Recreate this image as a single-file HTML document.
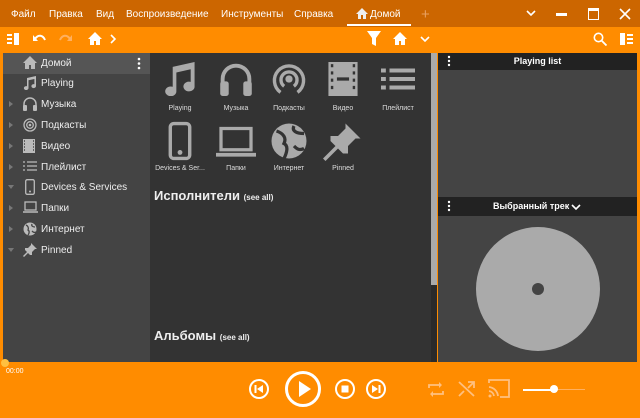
<!DOCTYPE html>
<html><head><meta charset="utf-8"><style>
*{margin:0;padding:0;box-sizing:border-box}
body{width:640px;height:418px;overflow:hidden;background:#ff8c00;font-family:"Liberation Sans",Arial,sans-serif;position:relative;color:#fff}
.a{position:absolute}
.menu span{position:absolute;top:9px;font-size:10px;color:#fff}
.side{left:3px;top:53px;width:147px;height:309px;background:#444}
.row{position:absolute;left:0;width:147px;height:21px;font-size:10px;color:#eee}
.row .t{position:absolute;left:38px;top:5px}
.row .ar{position:absolute;left:6px;top:7px;width:0;height:0;border-left:4px solid #777;border-top:3px solid transparent;border-bottom:3px solid transparent}
.row .dn{position:absolute;left:5px;top:8px;width:0;height:0;border-top:4px solid #777;border-left:3px solid transparent;border-right:3px solid transparent}
.row svg{position:absolute;left:20px;top:3px}
.tile{position:absolute;width:58px;text-align:center;font-size:7px;color:#ddd}
.tile svg{display:block;margin:0 auto}
</style></head><body>
<div class="a" style="left:0;top:0;width:640px;height:27px;background:#cc6600"></div>
<div class="menu">
<span style="left:11px">Файл</span><span style="left:49px">Правка</span><span style="left:96px">Вид</span><span style="left:126px">Воспроизведение</span><span style="left:221px">Инструменты</span><span style="left:294px">Справка</span>
<span style="left:370px">Домой</span>
</div>
<svg class="a" style="left:356px;top:8px" width="12" height="11" viewBox="0 0 12 11"><path d="M6 0L0 6h2v5h3V7h2v4h3V6h2z" fill="#eee"/></svg>
<div class="a" style="left:347px;top:24px;width:64px;height:2px;background:#fff"></div>
<div class="a" style="left:421px;top:6px;font-size:15px;color:#e8a060">+</div>
<svg class="a" style="left:526px;top:9px" width="10" height="8"><path d="M1 2l4 4 4-4" stroke="#fff" stroke-width="1.6" fill="none"/></svg>
<div class="a" style="left:556px;top:13px;width:11px;height:3px;background:#fff"></div>
<div class="a" style="left:588px;top:8px;width:11px;height:12px;border:1.5px solid #fff;border-top-width:3px"></div>
<svg class="a" style="left:619px;top:8px" width="12" height="12"><path d="M1 1l10 10M11 1L1 11" stroke="#fff" stroke-width="1.6"/></svg>
<!-- toolbar -->
<svg class="a" style="left:7px;top:33px" width="13" height="12"><path d="M0 1h5v2H0zM0 5h5v2H0zM0 9h5v2H0zM7 0h5v12H7z" fill="#fff"/></svg>
<svg class="a" style="left:33px;top:33px" width="14" height="10"><path d="M2 6C5 1 10 2 12 7" stroke="#fff" stroke-width="2" fill="none"/><path d="M0 2v6h5z" fill="#fff"/></svg>
<svg class="a" style="left:58px;top:33px" width="14" height="10"><path d="M12 6C9 1 4 2 2 7" stroke="#ffb060" stroke-width="2" fill="none"/><path d="M14 2v6H9z" fill="#ffb060"/></svg>
<svg class="a" style="left:88px;top:32px" width="14" height="13"><path d="M7 0L0 7h2v6h4V9h2v4h4V7h2z" fill="#fff"/></svg>
<svg class="a" style="left:110px;top:34px" width="7" height="10"><path d="M1 1l4 4-4 4" stroke="#fff" stroke-width="1.6" fill="none"/></svg>
<svg class="a" style="left:367px;top:31px" width="14" height="15"><path d="M0 0h14L9 7v8L5 13V7z" fill="#fff"/></svg>
<svg class="a" style="left:393px;top:32px" width="14" height="13"><path d="M7 0L0 7h2v6h4V9h2v4h4V7h2z" fill="#fff"/></svg>
<svg class="a" style="left:420px;top:35px" width="10" height="8"><path d="M1 2l4 4 4-4" stroke="#fff" stroke-width="1.6" fill="none"/></svg>
<svg class="a" style="left:593px;top:32px" width="14" height="14"><circle cx="5.5" cy="5.5" r="4.2" stroke="#fff" stroke-width="1.6" fill="none"/><path d="M8.5 8.5l5 5" stroke="#fff" stroke-width="1.8"/></svg>
<svg class="a" style="left:620px;top:33px" width="13" height="12"><path d="M0 0h5v12H0zM7 1h6v2H7zM7 5h6v2H7zM7 9h6v2H7z" fill="#fff"/></svg>
<!-- sidebar -->
<div class="a side">
<div class="row" style="top:0;background:#555"><svg width="14" height="13" viewBox="0 0 14 13"><path d="M7 0L0 7h2v6h4V9h2v4h4V7h2z" fill="#bbb"/></svg><span class="t">Домой</span>
<svg style="left:134px;top:4px" width="4" height="13"><circle cx="2" cy="2" r="1.3" fill="#fff"/><circle cx="2" cy="6.5" r="1.3" fill="#fff"/><circle cx="2" cy="11" r="1.3" fill="#fff"/></svg></div>
<div class="row" style="top:20px"><svg width="14" height="14"><path d="M4 2l9-2v10a2.3 2 0 1 1-1.6-1.8V3L5.5 4.3v7.7a2.3 2 0 1 1-1.5-1.8z" fill="#bbb"/></svg><span class="t">Playing</span></div>
<div class="row" style="top:41px"><i class="ar"></i><svg width="14" height="14"><path d="M1 12V7a6 6 0 0 1 12 0v5" stroke="#bbb" stroke-width="1.5" fill="none"/><rect x="0" y="8" width="4" height="6" rx="1" fill="#bbb"/><rect x="10" y="8" width="4" height="6" rx="1" fill="#bbb"/></svg><span class="t">Музыка</span></div>
<div class="row" style="top:62px"><i class="ar"></i><svg width="14" height="14"><circle cx="7" cy="7" r="6" stroke="#bbb" stroke-width="1.3" fill="none"/><circle cx="7" cy="7" r="3.3" stroke="#bbb" stroke-width="1.3" fill="none"/><circle cx="7" cy="7" r="1.3" fill="#bbb"/></svg><span class="t">Подкасты</span></div>
<div class="row" style="top:83px"><i class="ar"></i><svg width="12" height="14"><rect x="0" y="0" width="12" height="14" fill="#bbb"/><path d="M1 2h1M1 5h1M1 8h1M1 11h1M10 2h1M10 5h1M10 8h1M10 11h1" stroke="#444" stroke-width="1.5"/></svg><span class="t">Видео</span></div>
<div class="row" style="top:104px"><i class="ar"></i><svg width="14" height="12"><path d="M0 2h2M0 6h2M0 10h2M4 2h10M4 6h10M4 10h10" stroke="#bbb" stroke-width="1.3"/></svg><span class="t">Плейлист</span></div>
<div class="row" style="top:124px"><i class="dn"></i><svg width="10" height="16" style="left:22px;top:2px"><rect x="0.7" y="0.7" width="8.6" height="14.6" rx="1.5" stroke="#bbb" stroke-width="1.3" fill="none"/><circle cx="5" cy="12.5" r="1" fill="#bbb"/></svg><span class="t">Devices &amp; Services</span></div>
<div class="row" style="top:145px"><i class="ar"></i><svg width="15" height="12"><rect x="2" y="1" width="11" height="8" stroke="#bbb" stroke-width="1.3" fill="none"/><path d="M0 11h15" stroke="#bbb" stroke-width="1.5"/></svg><span class="t">Папки</span></div>
<div class="row" style="top:166px"><i class="ar"></i><svg width="14" height="14"><circle cx="7" cy="7" r="6.5" fill="#bbb"/><path d="M3 3c2 1 3 3 2 5 2 1 1 4 0 5M9 2c-1 2 1 3 3 3M9 9c1 1 2 2 4 1" stroke="#444" stroke-width="1.3" fill="none"/></svg><span class="t">Интернет</span></div>
<div class="row" style="top:187px"><i class="dn"></i><svg width="14" height="14"><path d="M8 0l6 6-2 0-3 3 0 3-2 0-2-2-4 4-1-1 4-4-2-2 0-2 3 0 3-3z" fill="#bbb"/></svg><span class="t">Pinned</span></div>
</div>
<!-- content -->
<div class="a" style="left:150px;top:53px;width:281px;height:309px;background:#333"></div>
<div class="a" style="left:431px;top:53px;width:6px;height:232px;background:#aaa"></div>
<div class="a" style="left:431px;top:285px;width:6px;height:77px;background:#2a2a2a"></div>
<div class="tile" style="left:151px;top:62px"><svg width="34" height="34" viewBox="0 0 14 14"><path d="M4 2l9-2v10a2.3 2 0 1 1-1.6-1.8V3L5.5 4.3v7.7a2.3 2 0 1 1-1.5-1.8z" fill="#aaa"/></svg><div style="margin-top:9px">Playing</div></div>
<div class="tile" style="left:207px;top:62px"><svg width="34" height="34" viewBox="0 0 14 14"><path d="M1.5 12V7a5.5 5.5 0 0 1 11 0v5" stroke="#aaa" stroke-width="1.6" fill="none"/><rect x="0.5" y="8" width="3.5" height="6" rx="1" fill="#aaa"/><rect x="10" y="8" width="3.5" height="6" rx="1" fill="#aaa"/></svg><div style="margin-top:9px">Музыка</div></div>
<div class="tile" style="left:260px;top:62px"><svg width="34" height="34" viewBox="0 0 14 14"><path d="M3.5 12.5A6 6 0 1 1 10.5 12.5" stroke="#aaa" stroke-width="1.4" fill="none"/><path d="M5 10A3.3 3.3 0 1 1 9 10" stroke="#aaa" stroke-width="1.4" fill="none"/><circle cx="7" cy="7" r="1.5" fill="#aaa"/></svg><div style="margin-top:9px">Подкасты</div></div>
<div class="tile" style="left:314px;top:62px"><svg width="34" height="34" viewBox="0 0 14 14"><rect x="1" y="0" width="12" height="14" fill="#aaa"/><path d="M2 1.5h1M2 4.5h1M2 7.5h1M2 10.5h1M11 1.5h1M11 4.5h1M11 7.5h1M11 10.5h1M4.5 7h5" stroke="#333" stroke-width="1.3"/></svg><div style="margin-top:9px">Видео</div></div>
<div class="tile" style="left:369px;top:62px"><svg width="34" height="34" viewBox="0 0 14 14"><path d="M0 3.5h2M0 7h2M0 10.5h2M3.5 3.5H14M3.5 7H14M3.5 10.5H14" stroke="#aaa" stroke-width="1.6"/></svg><div style="margin-top:9px">Плейлист</div></div>
<div class="tile" style="left:151px;top:121px"><svg width="34" height="40" viewBox="0 0 14 16"><rect x="3" y="0.8" width="8" height="14.4" rx="1.5" stroke="#aaa" stroke-width="1.4" fill="none"/><circle cx="7" cy="12.7" r="1" fill="#aaa"/></svg><div style="margin-top:4px">Devices &amp; Ser...</div></div>
<div class="tile" style="left:207px;top:121px"><svg width="40" height="40" viewBox="0 0 16 16"><rect x="2" y="3" width="12" height="8.5" stroke="#aaa" stroke-width="1.3" fill="none"/><path d="M0 13.5h16" stroke="#aaa" stroke-width="1.5"/></svg><div style="margin-top:4px">Папки</div></div>
<div class="tile" style="left:260px;top:121px"><svg width="40" height="40" viewBox="0 0 16 16"><circle cx="8" cy="8" r="7" fill="#aaa"/><path d="M3 4c3 1 4 3 3 5 2 1 1 4 0 6M10 2c-1 2 1 3 4 3M10 10c1 1 2 2 4 1" stroke="#333" stroke-width="1.3" fill="none"/></svg><div style="margin-top:4px">Интернет</div></div>
<div class="tile" style="left:314px;top:121px"><svg width="40" height="40" viewBox="0 0 16 16"><path d="M9 1l6 6-2 0-3 3 0 3-2 0-2-2-5 5-1-1 5-5-2-2 0-2 3 0 3-3z" fill="#aaa"/></svg><div style="margin-top:4px">Pinned</div></div>
<div class="a" style="left:154px;top:188px;font-size:13px;font-weight:bold;color:#eee">Исполнители <span style="font-size:8px">(see all)</span></div>
<div class="a" style="left:154px;top:328px;font-size:13px;font-weight:bold;color:#eee">Альбомы <span style="font-size:8px">(see all)</span></div>
<!-- right -->
<div class="a" style="left:438px;top:53px;width:199px;height:309px;background:#444"></div>
<div class="a" style="left:438px;top:53px;width:199px;height:17px;background:#222"></div>
<div class="a" style="left:438px;top:197px;width:199px;height:19px;background:#222"></div>
<svg class="a" style="left:447px;top:55px" width="4" height="12"><circle cx="2" cy="2" r="1.2" fill="#fff"/><circle cx="2" cy="6" r="1.2" fill="#fff"/><circle cx="2" cy="10" r="1.2" fill="#fff"/></svg>
<div class="a" style="left:438px;top:56px;width:199px;text-align:center;font-size:9px;font-weight:bold">Playing list</div>
<svg class="a" style="left:447px;top:200px" width="4" height="12"><circle cx="2" cy="2" r="1.2" fill="#fff"/><circle cx="2" cy="6" r="1.2" fill="#fff"/><circle cx="2" cy="10" r="1.2" fill="#fff"/></svg>
<div class="a" style="left:493px;top:201px;font-size:9px;font-weight:bold">Выбранный трек</div>
<svg class="a" style="left:571px;top:203px" width="10" height="8"><path d="M1 2l4 4 4-4" stroke="#fff" stroke-width="1.6" fill="none"/></svg>
<div class="a" style="left:476px;top:227px;width:124px;height:124px;border-radius:50%;background:#aaa"></div>
<div class="a" style="left:532px;top:283px;width:12px;height:12px;border-radius:50%;background:#444"></div>
<div class="a" style="left:438px;top:351px;width:199px;height:11px;background:#444"></div>
<!-- bottom -->
<div class="a" style="left:1px;top:359px;width:8px;height:8px;border-radius:50%;background:#ffc040"></div>
<div class="a" style="left:6px;top:368px;font-size:7px">00:00</div>
<svg class="a" style="left:248px;top:378px" width="22" height="22"><circle cx="11" cy="11" r="9" stroke="#fff" stroke-width="2" fill="none"/><path d="M7.5 7v8" stroke="#fff" stroke-width="2"/><path d="M15 7v8l-6-4z" fill="#fff"/></svg>
<svg class="a" style="left:284px;top:369px" width="38" height="40"><circle cx="19" cy="20" r="16.5" stroke="#fff" stroke-width="3" fill="none"/><path d="M15 12v16l12-8z" fill="#fff"/></svg>
<svg class="a" style="left:334px;top:378px" width="22" height="22"><circle cx="11" cy="11" r="9" stroke="#fff" stroke-width="2" fill="none"/><rect x="7.5" y="7.5" width="7" height="7" fill="#fff"/></svg>
<svg class="a" style="left:365px;top:378px" width="22" height="22"><circle cx="11" cy="11" r="9" stroke="#fff" stroke-width="2" fill="none"/><path d="M14.5 7v8" stroke="#fff" stroke-width="2"/><path d="M7 7v8l6-4z" fill="#fff"/></svg>
<svg class="a" style="left:427px;top:381px" width="18" height="17"><path d="M2 7V4h12M16 10v3H4" stroke="#ffc080" stroke-width="1.8" fill="none"/><path d="M12 1l3 3-3 3zM6 10l-3 3 3 3z" fill="#ffc080"/></svg>
<svg class="a" style="left:458px;top:381px" width="17" height="16"><path d="M1 1l15 14M10 1h6v6M16 1L10 7M1 15l5-5" stroke="#ffc080" stroke-width="1.8" fill="none"/></svg>
<svg class="a" style="left:488px;top:379px" width="22" height="19"><path d="M1 4V1h20v17h-9" stroke="#ffc080" stroke-width="1.8" fill="none"/><path d="M1 8a10 10 0 0 1 9 9M1 12a6 6 0 0 1 5 5" stroke="#ffc080" stroke-width="1.8" fill="none"/><circle cx="2" cy="17" r="1.5" fill="#ffc080"/></svg>
<div class="a" style="left:523px;top:389px;width:31px;height:1.5px;background:#fff"></div>
<div class="a" style="left:554px;top:389px;width:31px;height:1px;background:#ffb060"></div>
<div class="a" style="left:550px;top:385px;width:8px;height:8px;border-radius:50%;background:#fff"></div>
</body></html>
